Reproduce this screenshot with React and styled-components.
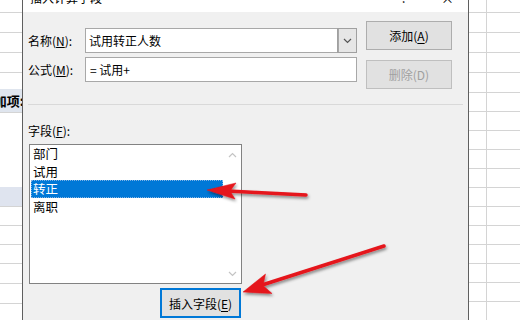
import React from 'react'
import styled, { createGlobalStyle } from 'styled-components'

const GlobalStyle = createGlobalStyle`
  html, body { margin: 0; padding: 0; }
  body {
    width: 520px;
    height: 320px;
    overflow: hidden;
    background: #fff;
    font-family: "Noto Sans CJK SC", "Microsoft YaHei", sans-serif;
    font-size: 12px;
    color: #000;
  }
`

const Screen = styled.div`
  position: relative;
  display: flex;
  width: 520px;
  height: 320px;
  overflow: hidden;
`

// spreadsheet behind the dialog
const Sheet = styled.div`
  width: ${p => p.w}px;
  flex-shrink: 0;
  display: flex;
  flex-direction: column;
  background: #fff;
  overflow: hidden;
`

const SheetRow = styled.div`
  display: flex;
  flex-shrink: 0;
  height: ${p => p.h}px;
  box-sizing: border-box;
  border-bottom: ${p => (p.noLine ? 'none' : '1px solid #d4d4d4')};
  background: ${p => p.bg || '#fff'};
`

const Cell = styled.div`
  box-sizing: border-box;
  width: ${p => (p.w ? `${p.w}px` : 'auto')};
  flex: ${p => (p.w ? '0 0 auto' : '1')};
  border-right: ${p => (p.line ? '1px solid #d4d4d4' : 'none')};
`

const HeadCell = styled.div`
  flex: 1;
  display: flex;
  align-items: center;
  justify-content: flex-end;
  overflow: hidden;
  white-space: nowrap;
  font-weight: bold;
  font-size: 13px;
  margin-right: -2px;
`

// dialog
const Dialog = styled.div`
  width: 447px;
  flex-shrink: 0;
  box-sizing: border-box;
  border-left: 1px solid #5f5f5f;
  border-right: 1px solid #5f5f5f;
  display: flex;
  flex-direction: column;
  background: #f0f0f0;
`

const TitleBar = styled.div`
  height: 12px;
  background: #fff;
  overflow: hidden;
  display: flex;
  justify-content: space-between;
  padding: 0 14px 0 7px;
`

const TitleText = styled.span`
  display: block;
  line-height: 14px;
  margin-top: -9px;
  font-size: 12px;
  color: #000;
`

const TitleTools = styled.div`
  display: flex;
  gap: 34px;
  line-height: 14px;
  margin-top: -9px;
  font-size: 13px;
`

const Top = styled.div`
  display: flex;
  align-items: flex-start;
  padding-left: 5px;
`

const FieldGrid = styled.div`
  display: grid;
  grid-template-columns: 57px 272px;
  grid-auto-rows: 25px;
  row-gap: 4px;
  margin-top: 16px;
  align-items: center;
`

const Label = styled.label`
  line-height: 16px;
  white-space: nowrap;
`

const TextBox = styled.div`
  box-sizing: border-box;
  height: 25px;
  display: flex;
  align-items: center;
  background: #fff;
  border: 1px solid #a8a8a8;
  padding-left: 4px;
`

const Combo = styled.div`
  box-sizing: border-box;
  height: 25px;
  display: flex;
  background: #fff;
  border: 1px solid #a8a8a8;
`

const ComboText = styled.div`
  flex: 1;
  display: flex;
  align-items: center;
  padding-left: 3px;
`

const ComboArrow = styled.div`
  width: 17px;
  display: flex;
  align-items: center;
  justify-content: center;
  background: #e6e6e6;
  border-left: 1px solid #a8a8a8;
  outline: 1px solid #a0a0a0;
`

const ButtonColumn = styled.div`
  display: flex;
  flex-direction: column;
  gap: 10px;
  margin: 9px 0 0 9px;
`

const Button = styled.div`
  box-sizing: border-box;
  width: ${p => p.w}px;
  height: ${p => p.h}px;
  display: flex;
  align-items: center;
  justify-content: center;
  background: #e1e1e1;
  border: ${p => (p.focused ? '2px solid #0078d7' : p.disabled ? '1px solid #bfbfbf' : '1px solid #adadad')};
  color: ${p => (p.disabled ? '#a0a0a0' : '#000')};
  white-space: nowrap;
  u { text-decoration-thickness: 1px; text-underline-offset: 2px; }
`

const Separator = styled.div`
  margin: 15px 5px 0 5px;
  border-top: 1px solid #d9d9d9;
`

const Lower = styled.div`
  display: flex;
  flex-direction: column;
  align-items: flex-start;
  padding-left: 6px;
`

const FieldsLabel = styled(Label)`
  margin-top: 18px;
  margin-left: -1px;
`

const ListBox = styled.div`
  box-sizing: border-box;
  margin-top: 5px;
  width: 213px;
  height: 140px;
  display: flex;
  background: #fff;
  border: 1px solid #828282;
`

const Items = styled.div`
  flex: 1;
  padding-left: 1px;
`

const Item = styled.div`
  height: 17.5px;
  line-height: 17.5px;
  padding-left: 2px;
  background: ${p => (p.selected ? '#0078d7' : 'transparent')};
  color: ${p => (p.selected ? '#fff' : '#000')};
  outline: ${p => (p.selected ? '1px dotted #7fb3e6' : 'none')};
  outline-offset: -1px;
  font-size: 12.5px;
`

const ScrollTrack = styled.div`
  width: 18px;
  display: flex;
  flex-direction: column;
  align-items: center;
  justify-content: space-between;
  padding: 7px 0 6px;
`

const InsertRow = styled.div`
  width: 212px;
  display: flex;
  justify-content: flex-end;
  margin-top: 4px;
`

const Overlay = styled.svg`
  position: absolute;
  left: 0;
  top: 0;
  pointer-events: none;
`

const Chevron = ({ up, color = '#c4c4c4' }) => (
  <svg width="9" height="6" viewBox="0 0 9 6">
    <path d={up ? 'M1 5 L4.5 1.5 L8 5' : 'M1 1 L4.5 4.5 L8 1'} fill="none" stroke={color} strokeWidth="1.2" />
  </svg>
)

const leftRows = [
  { h: 13 }, { h: 20 }, { h: 20 }, { h: 20 },
  { h: 16, noLine: true },
  { h: 24, head: '增加项:', bg: '#dfe5ee' },
  { h: 74, noLine: true },
  { h: 20, bg: '#dfe4ef' },
  { h: 19 }, { h: 19 }, { h: 19 }, { h: 20 }, { h: 20 }, { h: 20 },
]

const rightRows = [13, 20, 20, 20, 20, 19, 19, 19, 19, 19, 19, 19, 19, 19, 19, 19, 19]

const fields = ['部门', '试用', '转正', '离职']

const App = () => {
  return (
    <Screen>
      <GlobalStyle />
      <Sheet w={22}>
        {leftRows.map((r, i) => (
          <SheetRow key={i} h={r.h} bg={r.bg} noLine={r.noLine}>
            {r.head ? <HeadCell>{r.head}</HeadCell> : <Cell />}
          </SheetRow>
        ))}
      </Sheet>

      <Dialog>
        <TitleBar>
          <TitleText>插入计算字段</TitleText>
          <TitleTools>
            <span>?</span>
            <span>×</span>
          </TitleTools>
        </TitleBar>

        <Top>
          <FieldGrid>
            <Label>名称(<u>N</u>):</Label>
            <Combo>
              <ComboText>试用转正人数</ComboText>
              <ComboArrow>
                <Chevron color="#555" />
              </ComboArrow>
            </Combo>
            <Label>公式(<u>M</u>):</Label>
            <TextBox>=&nbsp;试用+</TextBox>
          </FieldGrid>
          <ButtonColumn>
            <Button w={86} h={29}>添加(<u>A</u>)</Button>
            <Button w={86} h={29} disabled>删除(D)</Button>
          </ButtonColumn>
        </Top>

        <Separator />

        <Lower>
          <FieldsLabel>字段(<u>F</u>):</FieldsLabel>
          <ListBox>
            <Items>
              {fields.map(f => (
                <Item key={f} selected={f === '转正'}>{f}</Item>
              ))}
            </Items>
            <ScrollTrack>
              <Chevron up />
              <Chevron />
            </ScrollTrack>
          </ListBox>
          <InsertRow>
            <Button w={81} h={30} focused>插入字段(<u>E</u>)</Button>
          </InsertRow>
        </Lower>
      </Dialog>

      <Sheet w={51}>
        {rightRows.map((h, i) => (
          <SheetRow key={i} h={h}>
            <Cell w={18} line />
            <Cell />
          </SheetRow>
        ))}
      </Sheet>

      <Overlay width="520" height="320" viewBox="0 0 520 320">
        <defs>
          <filter id="shadow" x="-20%" y="-50%" width="140%" height="200%">
            <feDropShadow dx="1" dy="2" stdDeviation="1.5" floodColor="#000" floodOpacity="0.45" />
          </filter>
        </defs>
        <g filter="url(#shadow)" fill="#e5141b" stroke="#e5141b">
          <line x1="306" y1="195" x2="228" y2="191" strokeWidth="3.5" strokeLinecap="round" />
          <polygon points="207,190 236,183 230,191 235,199" strokeWidth="0.5" strokeLinejoin="round" />
          <line x1="384" y1="246" x2="262" y2="285" strokeWidth="3.5" strokeLinecap="round" />
          <polygon points="243,292 265.5,274 263,285.5 272,293.5" strokeWidth="0.5" strokeLinejoin="round" />
        </g>
      </Overlay>
    </Screen>
  )
}

export default App
